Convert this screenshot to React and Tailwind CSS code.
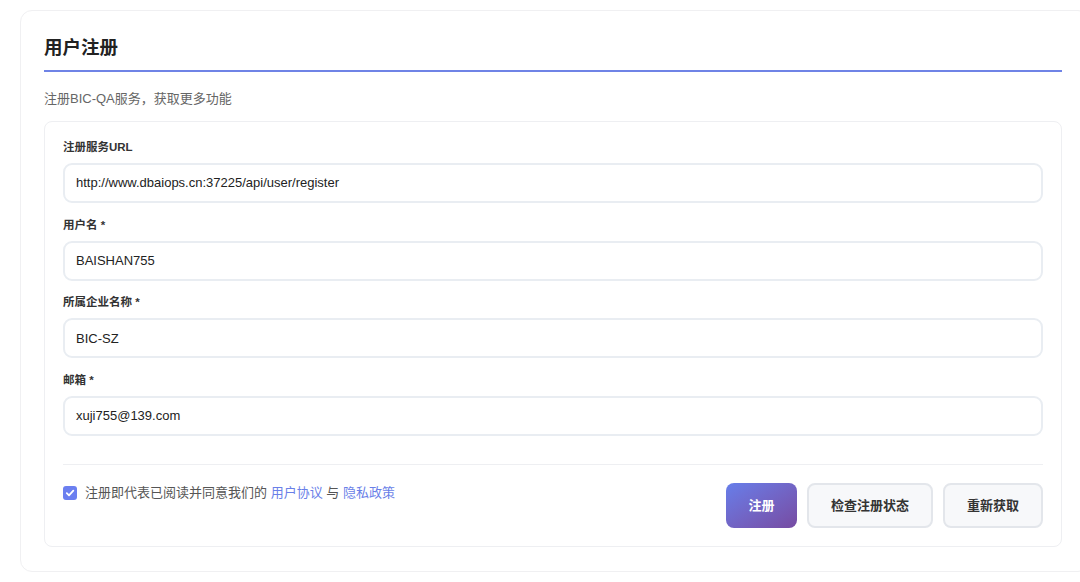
import React from "react";

const font = { fontFamily: '"Liberation Sans", "Noto Sans CJK SC", sans-serif' };

function Field({ label, value }) {
  return (
    <div className="flex flex-col">
      <div className="text-[11.5px] leading-[18px] font-bold text-[#333] mb-[7px]">{label}</div>
      <div className="h-[40px] border-2 border-[#e9edf2] rounded-[9px] flex items-center pl-[11px] text-[13px] text-[#222]">
        {value}
      </div>
    </div>
  );
}

export default function App() {
  return (
    <div className="w-[1080px] h-[582px] bg-white overflow-hidden pl-5 pt-[10px]" style={font}>
      <div className="w-[1070px] h-[562px] border border-[#f0f0f2] rounded-xl pl-[23px] pt-6">
        <div className="w-[1018px]">
          <div className="border-b-2 border-[#6f83e6] pb-[9px]">
            <h1 className="text-[18.5px] leading-[26px] font-bold text-[#222]">用户注册</h1>
          </div>
          <p className="mt-[17px] text-[13px] leading-5 text-[#666]">注册BIC-QA服务，获取更多功能</p>
          <div className="mt-[12px] border border-[#eeeff2] rounded-lg px-[18px] pt-[16px] pb-[18px]">
            <div className="flex flex-col gap-[12.7px]">
              <Field label="注册服务URL" value="http://www.dbaiops.cn:37225/api/user/register" />
              <Field label="用户名 *" value="BAISHAN755" />
              <Field label="所属企业名称 *" value="BIC-SZ" />
              <Field label="邮箱 *" value="xuji755@139.com" />
            </div>
            <div className="mt-[28px] border-t border-[#eeeff2] pt-[18px] flex justify-between items-start">
              <label className="flex items-center h-5 text-[13px] text-[#555]">
                <span className="w-[14px] h-[14px] rounded-[3px] bg-[#6b7ff0] flex items-center justify-center mr-2">
                  <svg width="10" height="10" viewBox="0 0 10 10" fill="none">
                    <path d="M1.8 5.2 L4 7.3 L8.3 2.6" stroke="white" strokeWidth="1.8" strokeLinecap="round" strokeLinejoin="round" />
                  </svg>
                </span>
                <span>注册即代表已阅读并同意我们的 <span className="text-[#6a7fe8]">用户协议</span> 与 <span className="text-[#6a7fe8]">隐私政策</span></span>
              </label>
              <div className="flex gap-[10px]">
                <button className="h-[45px] w-[71px] rounded-lg bg-gradient-to-br from-[#667eea] to-[#764ba2] text-white text-[13px] font-bold">注册</button>
                <button className="h-[45px] w-[126px] rounded-lg bg-[#f7f8fa] border-2 border-[#e3e6eb] text-[#333] text-[13px] font-bold">检查注册状态</button>
                <button className="h-[45px] w-[100px] rounded-lg bg-[#f7f8fa] border-2 border-[#e3e6eb] text-[#333] text-[13px] font-bold">重新获取</button>
              </div>
            </div>
          </div>
        </div>
      </div>
    </div>
  );
}
